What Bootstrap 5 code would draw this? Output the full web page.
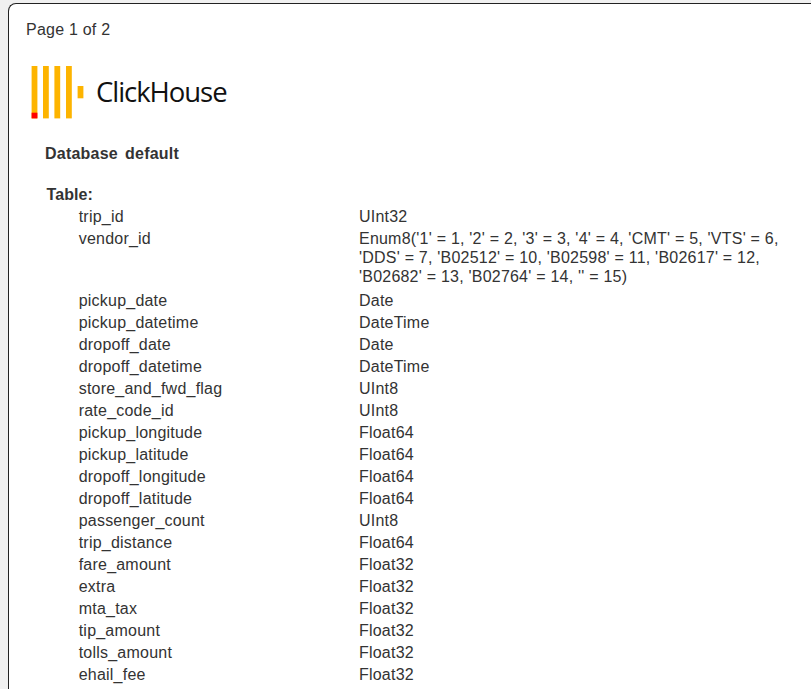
<!DOCTYPE html>
<html lang="en">
<head>
<meta charset="utf-8">
<title>ClickHouse schema</title>
<link href="https://cdn.jsdelivr.net/npm/bootstrap@5.3.0/dist/css/bootstrap.min.css" rel="stylesheet">
<style>
html, body { height: 100%; overflow: hidden; }
body { background: #f0f0f0; font-family: "Liberation Sans", Arial, sans-serif; font-size: 16px; letter-spacing: .22px; color: #333; padding: 3px 0 0 8px; }
.sheet { background: #fff; border: 1px solid #222; border-bottom: 0; border-right: 0; border-top-left-radius: 8px; height: 800px; padding: 16px 0 0 17px; }
.pageno { line-height: 19px; margin-bottom: 27px; }
.brand { height: 53px; margin: 0 0 0 5px; gap: 12px; }
.brand-name { font-family: "Open Sans", "Noto Sans", sans-serif; font-size: 27.5px; letter-spacing: -1.05px; color: #111; line-height: 1; margin-bottom: 2px; }
.dbname { font-weight: 700; margin: 25px 0 0 19px; line-height: 19px; word-spacing: 2.5px; }
.tbl-head { font-weight: 700; margin: 22px 0 0 20.5px; line-height: 19px; letter-spacing: .1px; }
.schema { margin: 1px 0 0 52.7px; }
.cell-name { flex: 0 0 280.3px; }
.cell-type { width: 430px; }
.fieldrow { line-height: 19px; padding: 2px 0 1px; }
.fieldrow.tall { padding-bottom: 3px; }
</style>
</head>
<body>
<div class="sheet">
  <div class="pageno">Page 1 of 2</div>
  <div class="brand d-flex align-items-center">
    <svg width="53" height="53" viewBox="0 0 53 53" aria-hidden="true">
      <rect x="0.600" y="0" width="5.800" height="52.400" fill="#fdb400"/>
      <rect x="0.600" y="46.700" width="5.800" height="5.700" fill="#f00"/>
      <rect x="12" y="0" width="5.800" height="52.400" fill="#fdb400"/>
      <rect x="23.400" y="0" width="5.800" height="52.400" fill="#fdb400"/>
      <rect x="35" y="0" width="5.800" height="52.400" fill="#fdb400"/>
      <rect x="46.600" y="20" width="5.800" height="12.300" fill="#fdb400"/>
    </svg>
    <span class="brand-name">ClickHouse</span>
  </div>
  <div class="dbname">Database default</div>
  <div class="tbl-head">Table:</div>
  <div class="schema">
    <div class="fieldrow d-flex"><div class="cell-name">trip_id</div><div class="cell-type">UInt32</div></div>
    <div class="fieldrow tall d-flex"><div class="cell-name">vendor_id</div><div class="cell-type">Enum8('1' = 1, '2' = 2, '3' = 3, '4' = 4, 'CMT' = 5, 'VTS' = 6, 'DDS' = 7, 'B02512' = 10, 'B02598' = 11, 'B02617' = 12, 'B02682' = 13, 'B02764' = 14, '' = 15)</div></div>
    <div class="fieldrow d-flex"><div class="cell-name">pickup_date</div><div class="cell-type">Date</div></div>
    <div class="fieldrow d-flex"><div class="cell-name">pickup_datetime</div><div class="cell-type">DateTime</div></div>
    <div class="fieldrow d-flex"><div class="cell-name">dropoff_date</div><div class="cell-type">Date</div></div>
    <div class="fieldrow d-flex"><div class="cell-name">dropoff_datetime</div><div class="cell-type">DateTime</div></div>
    <div class="fieldrow d-flex"><div class="cell-name">store_and_fwd_flag</div><div class="cell-type">UInt8</div></div>
    <div class="fieldrow d-flex"><div class="cell-name">rate_code_id</div><div class="cell-type">UInt8</div></div>
    <div class="fieldrow d-flex"><div class="cell-name">pickup_longitude</div><div class="cell-type">Float64</div></div>
    <div class="fieldrow d-flex"><div class="cell-name">pickup_latitude</div><div class="cell-type">Float64</div></div>
    <div class="fieldrow d-flex"><div class="cell-name">dropoff_longitude</div><div class="cell-type">Float64</div></div>
    <div class="fieldrow d-flex"><div class="cell-name">dropoff_latitude</div><div class="cell-type">Float64</div></div>
    <div class="fieldrow d-flex"><div class="cell-name">passenger_count</div><div class="cell-type">UInt8</div></div>
    <div class="fieldrow d-flex"><div class="cell-name">trip_distance</div><div class="cell-type">Float64</div></div>
    <div class="fieldrow d-flex"><div class="cell-name">fare_amount</div><div class="cell-type">Float32</div></div>
    <div class="fieldrow d-flex"><div class="cell-name">extra</div><div class="cell-type">Float32</div></div>
    <div class="fieldrow d-flex"><div class="cell-name">mta_tax</div><div class="cell-type">Float32</div></div>
    <div class="fieldrow d-flex"><div class="cell-name">tip_amount</div><div class="cell-type">Float32</div></div>
    <div class="fieldrow d-flex"><div class="cell-name">tolls_amount</div><div class="cell-type">Float32</div></div>
    <div class="fieldrow d-flex"><div class="cell-name">ehail_fee</div><div class="cell-type">Float32</div></div>
  </div>
</div>
</body>
</html>
